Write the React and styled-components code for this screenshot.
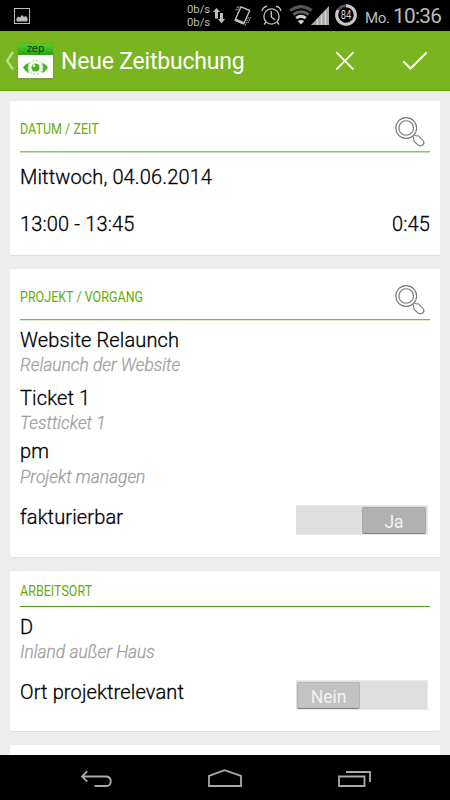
import React from "react";
import styled, { createGlobalStyle } from "styled-components";

const Global = createGlobalStyle`
  * { box-sizing: border-box; }
  body { margin: 0; background: #000; font-family: Roboto, "Liberation Sans", sans-serif; }
  svg { display: block; flex: none; }
`;

const Screen = styled.div`
  width: 450px;
  height: 800px;
  display: flex;
  flex-direction: column;
  overflow: hidden;
  background: #ededed;
`;

const StatusBar = styled.div`
  flex: none;
  height: 31px;
  display: flex;
  background: #000;
  color: #bdbdbd;
`;

const StatusIcon = styled.div`
  margin-left: ${(p) => p.$gap || 0}px;
  padding-top: ${(p) => p.$top}px;
`;

const Rates = styled.div`
  width: 23px;
  margin-left: 157px;
  padding-top: 3px;
  font-size: 11.3px;
  line-height: 13px;
  white-space: nowrap;
`;

const Day = styled.span`
  width: 24px;
  margin-left: 8px;
  font-size: 15px;
  line-height: 37px;
  letter-spacing: -0.3px;
  white-space: nowrap;
`;

const Clock = styled.span`
  margin-left: 4px;
  font-size: 20.8px;
  font-weight: 400;
  line-height: 33px;
  letter-spacing: -0.7px;
  white-space: nowrap;
`;

const AppBar = styled.header`
  flex: none;
  height: 60px;
  display: flex;
  align-items: center;
  padding-left: 5px;
  background: #7ab420;
  border-bottom: 1px solid #62a400;
  border-top: 1px solid #76ac23;
`;

const Logo = styled.div`
  width: 35px;
  height: 35px;
  margin-left: 3px;
  background: #fff;
  border-bottom: 1px solid #7d9b55;
  box-shadow: 0 0 1px #5d8a18;
`;

const LogoName = styled.div`
  height: 11px;
  background: linear-gradient(#55ce2a, #2ba312);
  color: #103a05;
  font: 10px/10px "DejaVu Sans", sans-serif;
  text-align: center;
`;

const AppTitle = styled.h1`
  margin: 2px 0 0 8px;
  width: 274px;
  color: #fff;
  font-size: 23px;
  font-weight: 400;
  line-height: 30px;
  letter-spacing: -0.2px;
  white-space: nowrap;
`;

const Action = styled.div`
  margin-left: ${(p) => p.$gap || 0}px;
`;

const Content = styled.main`
  height: 664px;
  flex: none;
  overflow: hidden;
  padding: 10px 10px 0;
  display: flex;
  flex-direction: column;
  gap: 14px;
`;

const Card = styled.section`
  flex: none;
  height: ${(p) => p.$h}px;
  padding: 0 10px;
  background: #fff;
  border-radius: 2px;
  box-shadow: 0 1px 0 #dedede;
`;

const CardHeader = styled.div`
  height: ${(p) => p.$h}px;
  display: flex;
  justify-content: space-between;
  border-bottom: 1px solid ${(p) => p.$line};
  box-shadow: 0 1px 0 ${(p) => p.$fade || "transparent"};
`;

const Heading = styled.h2`
  margin: ${(p) => p.$top}px 0 0;
  height: 18px;
  color: #66ac0c;
  font-size: 15.5px;
  font-weight: 400;
  line-height: 17px;
  white-space: nowrap;
  transform: scaleX(0.808);
  transform-origin: left;
`;

const Search = styled.div`
  padding: 15px 4px 0 0;
`;

const Row = styled.div`
  display: flex;
  justify-content: space-between;
  height: 24px;
  margin-top: ${(p) => p.$top}px;
  color: #000;
  font-size: 20px;
  font-weight: 300;
  line-height: 24px;
  white-space: nowrap;
`;

const Label = styled.span`
  letter-spacing: 0.14px;
  -webkit-text-stroke: 0.3px #000;
`;

const Note = styled.div`
  height: 20px;
  margin-top: ${(p) => p.$top}px;
  color: #a0a0a0;
  font-size: 17.8px;
  font-style: italic;
  font-weight: 300;
  line-height: 20px;
  white-space: nowrap;
  -webkit-text-stroke: 0.3px #a0a0a0;
  transform: scaleX(0.977);
  transform-origin: left;
`;

const Track = styled.div`
  width: 132px;
  height: 30px;
  margin: 0 2px 0 0;
  padding: 2px 1px 1px;
  display: flex;
  justify-content: ${(p) => (p.$on ? "flex-end" : "flex-start")};
  background: #dedede;
  border: 1px solid #e9e9e9;
  border-left-width: 0;
`;

const Thumb = styled.div`
  width: ${(p) => (p.$on ? 64 : 63)}px;
  height: 27px;
  margin-top: -1px;
  background: ${(p) => (p.$on ? "#b1b1b1" : "#c2c2c2")};
  border: 1px solid ${(p) => (p.$on ? "#a8a8a8" : "#b5b5b5")};
  border-bottom-color: #7f7f7f;
  border-radius: 2px;
  color: #f2f2f2;
  font-size: 17.5px;
  font-weight: 400;
  line-height: 29px;
  text-align: center;
`;

const NavBar = styled.nav`
  flex: none;
  height: 45px;
  background: #000;
  display: flex;
  padding: 13px 0 0 80px;
`;

const NavIcon = styled.div`
  width: ${(p) => p.$w}px;
`;

const Magnifier = () => (
  <svg width="32" height="32" viewBox="0 0 32 32" fill="none" stroke="#777" strokeWidth="1.1">
    <circle cx="12.2" cy="12" r="10.4" />
    <circle cx="12.2" cy="12" r="7.3" />
    <path d="M18.8 20 19.7 22.8Q19.2 24.2 20.3 25.5L24.4 29.3Q26.2 30.6 28.3 29.2 31 27 29.4 25L25.4 20.7Q24.2 19.3 22.5 19.9L20 18.8" />
  </svg>
);

const Switch = ({ on, children }) => (
  <Track $on={on}>
    <Thumb $on={on}>{children}</Thumb>
  </Track>
);

const Entry = ({ top, title, note, noteTop = 3 }) => (
  <>
    <Row $top={top}>
      <Label>{title}</Label>
    </Row>
    <Note $top={noteTop}>{note}</Note>
  </>
);

export default function App() {
  return (
    <Screen>
      <Global />
      <StatusBar>
        <StatusIcon $gap={14} $top={8}>
          <svg width="16" height="16" viewBox="0 0 16 16">
            <rect x=".5" y=".5" width="15" height="15" fill="none" stroke="#bbb" />
            <path d="M2.5 13.5V10L4.5 8.5 6 9.5 8 7 10 9 12 8 13.5 10V13.5Z" fill="#bbb" />
          </svg>
        </StatusIcon>
        <Rates>
          <div>0b/s</div>
          <div>0b/s</div>
        </Rates>
        <StatusIcon $gap={3} $top={8}>
          <svg width="12" height="16" viewBox="0 0 12 16" fill="#bdbdbd">
            <path d="M3.5 0 7 4H5V10.5H2V4H0ZM7 5H10V11H12L8.5 15.5 5 11H7Z" />
          </svg>
        </StatusIcon>
        <StatusIcon $gap={8} $top={5}>
          <svg width="20" height="22" viewBox="0 0 20 22" fill="none" stroke="#bdbdbd">
            <path d="M8 1.8 16.7 5.5 10.8 18.8 2 15.2Z" strokeWidth="1.4" strokeLinejoin="round" />
            <path d="M2.3 14.8 10.6 18.3" strokeWidth="2.6" />
            <path d="M4.5 1.5 2.5 6M6.2 1.5 4.2 6M17.5 12 15 18M15.5 12.5 11.8 21" strokeDasharray="1.5 1" />
          </svg>
        </StatusIcon>
        <StatusIcon $gap={8} $top={5}>
          <svg width="21" height="21" viewBox="0 0 21 21" fill="none" stroke="#bdbdbd" strokeWidth="1.4">
            <circle cx="10.5" cy="11.5" r="7.6" />
            <path d="M10.3 6V12L14 15M1 6Q2 2 6 1.3M15 1.3Q19 2 20 6M5 17 3 19.5M16 17 18 19.5" />
          </svg>
        </StatusIcon>
        <StatusIcon $gap={7} $top={5}>
          <svg width="40" height="20" viewBox="0 0 40 20" fill="none">
            <path d="M1.2 5.5Q12 -2.2 22.8 5.5" stroke="#555" strokeWidth="3.3" />
            <path d="M4.3 9.5Q12 4 19.7 9.5" stroke="#606060" strokeWidth="3" />
            <path d="M7.2 13.2Q12 9.4 16.8 13.2" stroke="#d0d0d0" strokeWidth="2.8" />
            <path d="M8.8 16Q12 13.8 15.2 16L12 19.5Z" fill="#d0d0d0" />
            <path d="M22 20 40 1V20Z" fill="#a8a8a8" />
            <path d="M28.5 14V20M32.5 9.5V20M36.5 5.5V20" stroke="#d6d6d6" strokeWidth="1.4" />
          </svg>
        </StatusIcon>
        <StatusIcon $gap={6} $top={4}>
          <svg width="22" height="22" viewBox="0 0 22 22">
            <circle cx="11" cy="11" r="9.3" fill="none" stroke="#555" strokeWidth="2.8" />
            <path d="M11 1.7A9.3 9.3 0 1 1 3.1 6.1" fill="none" stroke="#c8c8c8" strokeWidth="3" />
            <text x="11" y="15" textAnchor="middle" textLength="10.5" lengthAdjust="spacingAndGlyphs" fill="#d0d0d0" fontFamily="Roboto" fontSize="12">84</text>
          </svg>
        </StatusIcon>
        <Day>Mo.</Day>
        <Clock>10:36</Clock>
      </StatusBar>

      <AppBar>
        <svg width="10" height="20" viewBox="0 0 10 20">
          <path d="M8 1 2.2 9.8 8 18.5" fill="none" stroke="#bedc90" strokeWidth="2.4" />
        </svg>
        <Logo>
          <LogoName>zep</LogoName>
          <svg width="35" height="24" viewBox="0 0 35 24" fill="none">
            <path d="M11 7.5Q7 9.5 5 12.5 7 16 11 18.5L9.6 12.5ZM24 7.5Q28 9.5 30 12.5 28 16 24 18.5L25.4 12.5Z" fill="#43b51d" />
            <circle cx="17.5" cy="12.5" r="7" stroke="#8fcf79" strokeDasharray="2 1.7" />
            <circle cx="17.5" cy="12.5" r="4" fill="#43b51d" />
            <circle cx="16" cy="10.6" r="1.4" fill="#e8f8e2" />
          </svg>
        </Logo>
        <AppTitle>Neue Zeitbuchung</AppTitle>
        <Action>
          <svg width="20" height="20" viewBox="0 0 20 20">
            <path d="M1.2 1.2 18.6 18.6M18.6 1.2 1.2 18.6" stroke="#fff" strokeWidth="1.8" />
          </svg>
        </Action>
        <Action $gap={47}>
          <svg width="26" height="20" viewBox="0 0 26 20">
            <path d="M1.2 10.2 8.6 17.5 24.6 1.5" fill="none" stroke="#fff" strokeWidth="2.1" />
          </svg>
        </Action>
      </AppBar>

      <Content>
        <Card $h={154}>
          <CardHeader $h={51} $line="#8fc45b" $fade="#c5e0a8">
            <Heading $top={20}>DATUM / ZEIT</Heading>
            <Search><Magnifier /></Search>
          </CardHeader>
          <Row $top={13}><Label>Mittwoch, 04.06.2014</Label></Row>
          <Row $top={23}>
            <Label>13:00 - 13:45</Label>
            <Label>0:45</Label>
          </Row>
        </Card>

        <Card $h={288}>
          <CardHeader $h={51} $line="#7cb83c" $fade="#dcebc9">
            <Heading $top={20}>PROJEKT / VORGANG</Heading>
            <Search><Magnifier /></Search>
          </CardHeader>
          <Entry top={8} title="Website Relaunch" note="Relaunch der Website" />
          <Entry top={11} title="Ticket 1" note="Testticket 1" />
          <Entry top={6} title="pm" note="Projekt managen" noteTop={4} />
          <Row $top={18}>
            <Label>fakturierbar</Label>
            <Switch on>Ja</Switch>
          </Row>
        </Card>

        <Card $h={160}>
          <CardHeader $h={36} $line="#4aa010">
            <Heading $top={12}>ARBEITSORT</Heading>
          </CardHeader>
          <Entry top={8} title="D" note="Inland außer Haus" />
          <Row $top={18}>
            <Label>Ort projektrelevant</Label>
            <Switch>Nein</Switch>
          </Row>
        </Card>

        <Card $h={40} />
      </Content>

      <NavBar>
        <NavIcon $w={127}>
          <svg width="33" height="21" viewBox="0 0 33 21" fill="none" stroke="#aaa" strokeWidth="1.8">
            <path d="M7.2 3.2 2 8.5 7.2 13.7M2 8.5H26.5Q30.8 9 30.8 13.5 30.5 17.8 26.5 18H14.5" />
          </svg>
        </NavIcon>
        <NavIcon $w={130}>
          <svg width="36" height="21" viewBox="0 0 36 21" fill="none" stroke="#aaa" strokeWidth="1.8">
            <path d="M2 18V7.8L17.7 2.2 34 7.8V18Z" />
          </svg>
        </NavIcon>
        <NavIcon $w={36}>
          <svg width="36" height="21" viewBox="0 0 36 21" fill="none" stroke="#aaa" strokeWidth="1.8">
            <path d="M2 8.5H27.5V18H2ZM9 4H33V14" />
          </svg>
        </NavIcon>
      </NavBar>
    </Screen>
  );
}
